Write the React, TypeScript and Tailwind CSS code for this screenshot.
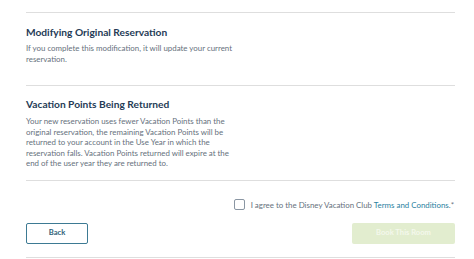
import React from "react";

export default function App() {
  const font = { fontFamily: "Lato, 'Open Sans', sans-serif" };
  return (
    <div className="w-[474px] h-[259px] bg-white overflow-hidden" style={font}>
      <div className="ml-[26px] w-[429px] flex flex-col">
        <div className="mt-[12px] h-[1px] bg-[#dedede]" />
        <div className="pt-[12px] pb-[21px]">
          <h2 className="text-[10.2px] leading-[14px] font-bold text-[#253b56]">Modifying Original Reservation</h2>
          <p className="mt-[4px] w-[207px] text-[7.9px] leading-[10.5px] text-[#66717d]">
            If you complete this modification, it will update your current reservation.
          </p>
        </div>
        <div className="h-[1px] bg-[#dedede]" />
        <div className="pt-[11px] pb-[11px]">
          <h2 className="text-[10.2px] leading-[14px] font-bold text-[#253b56]">Vacation Points Being Returned</h2>
          <p className="mt-[5px] w-[207px] text-[7.9px] leading-[10.5px] text-[#66717d]">
            Your new reservation uses fewer Vacation Points than the original reservation, the remaining Vacation Points will be returned to your account in the Use Year in which the reservation falls. Vacation Points returned will expire at the end of the user year they are returned to.
          </p>
        </div>
        <div className="h-[1px] bg-[#dedede]" />
        <div className="pt-[18px] flex items-center justify-end gap-[6px]">
          <div className="w-[11px] h-[11px] border border-[#8a96a3] rounded-[2px] bg-white" />
          <span className="text-[7.9px] leading-[12px] text-[#66717d] pr-[1px]">
            I agree to the Disney Vacation Club <span className="text-[#2a7fa0]">Terms and Conditions</span>.*
          </span>
        </div>
        <div className="mt-[12px] flex justify-between">
          <button className="w-[62px] h-[21px] border border-[#3d7a93] rounded-[2px] text-[7.6px] font-bold text-[#2f5f78] bg-white">
            Back
          </button>
          <button className="w-[103px] h-[21px] rounded-[2px] bg-[#e2edcf] text-[7.6px] font-bold text-[#f4f8ec]">
            Book This Room
          </button>
        </div>
        <div className="mt-[13px] h-[1px] bg-[#dedede]" />
      </div>
    </div>
  );
}
